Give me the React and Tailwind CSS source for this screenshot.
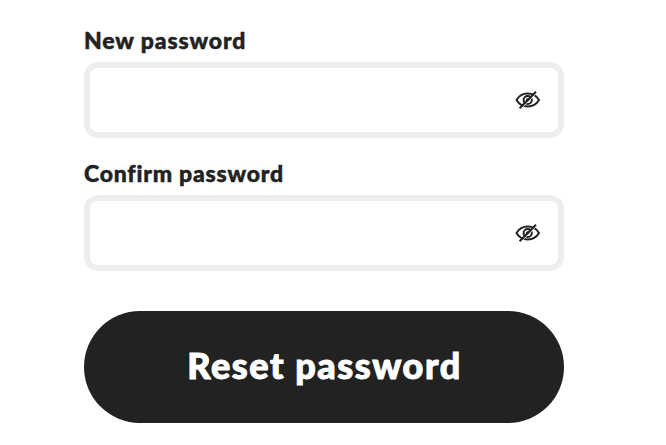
import React from "react";

function HiddenEye() {
  return (
    <svg width="26" height="20" viewBox="0 0 26 20" fill="none" stroke="#222" strokeWidth="2">
      <path d="M1.5 10C4 5.8 8 3.6 12.7 3.6S21.5 5.8 24 10C21.5 14.2 17.5 16.4 12.7 16.4S4 14.2 1.5 10Z" />
      <circle cx="12.7" cy="10" r="4.1" />
      <circle cx="12.7" cy="10" r="1.8" fill="#222" stroke="none" />
      <path d="M6 18.8L22 2.8" stroke="#fff" strokeWidth="0.9" />
      <path d="M4.6 18.2L21 1.8" />
    </svg>
  );
}

function PasswordField({ id, label, tracking }) {
  return (
    <div>
      <label htmlFor={id} className={`block h-10 whitespace-nowrap text-[23px] leading-[37px] font-black [-webkit-text-stroke:0.5px_#222] ${tracking}`}>
        {label}
      </label>
      <div className="flex h-[76px] items-center rounded-[14px] border-[6px] border-[#eee] bg-white pr-[17px]">
        <input id={id} type="password" className="h-full min-w-0 flex-1 px-4 outline-none" />
        <button type="button" aria-label="Show password">
          <HiddenEye />
        </button>
      </div>
    </div>
  );
}

export default function App() {
  return (
    <main className="h-[445px] w-[666px] overflow-hidden bg-white pt-[22px] pl-[84px] font-['Lato',sans-serif] text-[#222]">
      <form className="flex w-[480px] flex-col">
        <div className="flex flex-col gap-[17px]">
          <PasswordField id="new" label="New password" tracking="tracking-[0.88px]" />
          <PasswordField id="confirm" label="Confirm password" tracking="tracking-[0.78px]" />
        </div>
        <button type="button" className="mt-10 flex h-28 items-center justify-center rounded-full bg-[#222] pb-[5px] pl-px text-[36px] font-black tracking-[1.55px] text-white [-webkit-text-stroke:1px_#fff]">
          Reset password
        </button>
      </form>
    </main>
  );
}
